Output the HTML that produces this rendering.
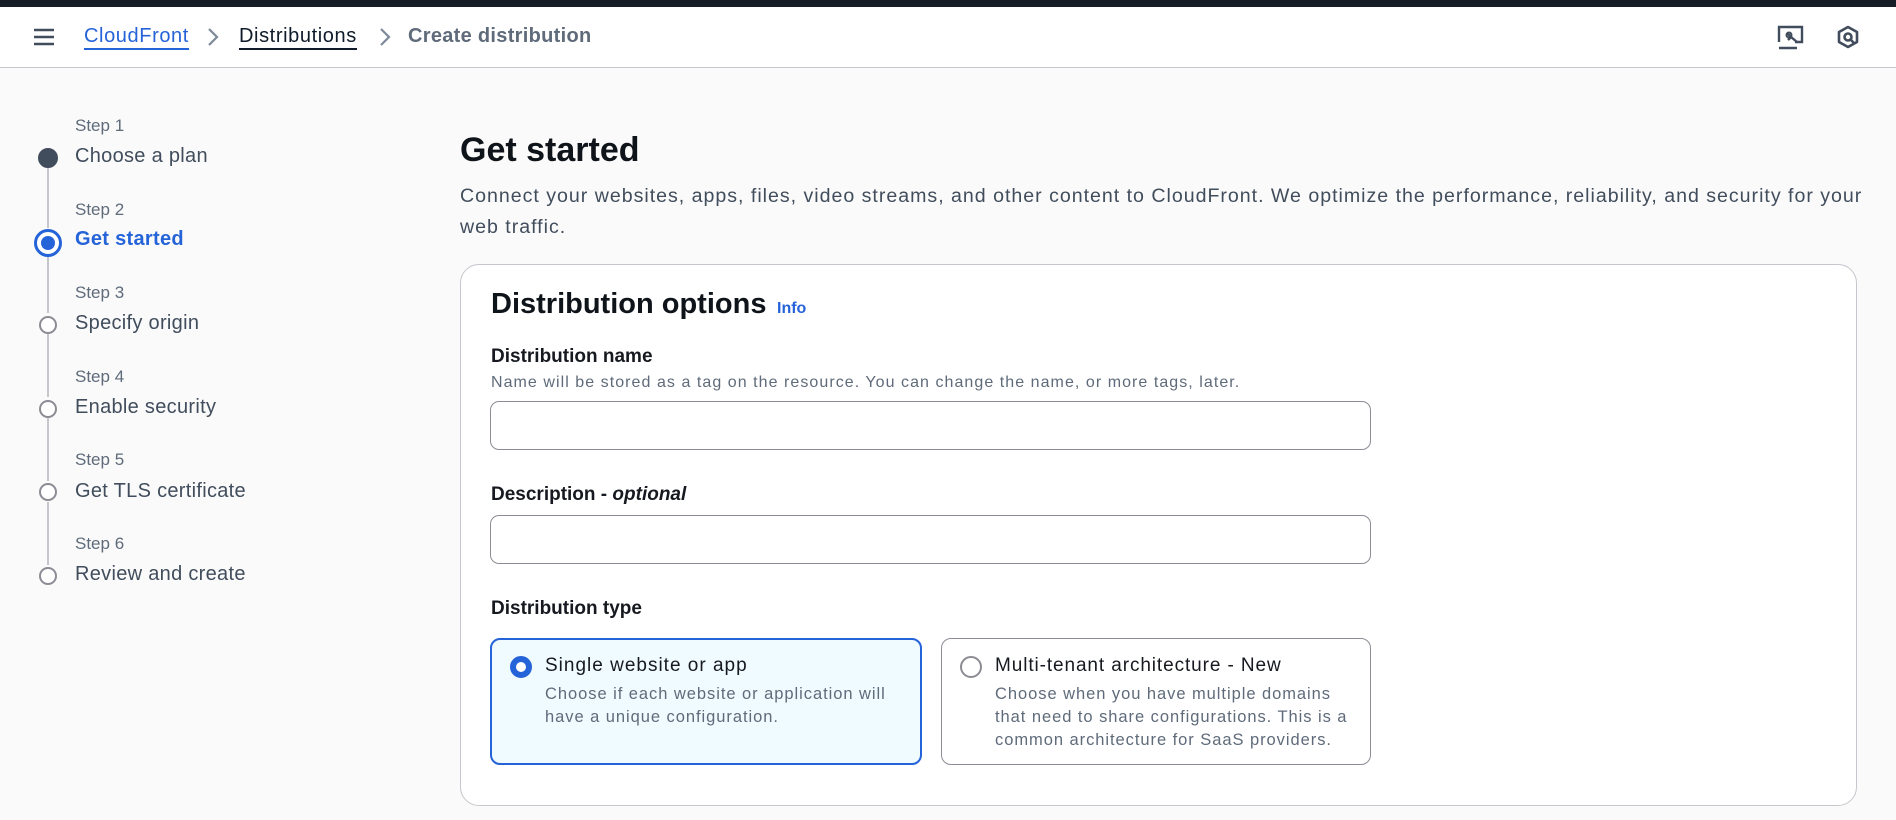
<!DOCTYPE html>
<html><head><meta charset="utf-8"><style>
*{margin:0;padding:0;box-sizing:border-box}
body{width:1896px;height:820px;overflow:hidden;background:#fafafa;font-family:"Liberation Sans",sans-serif;color:#16191f;position:relative}
.a{position:absolute;white-space:nowrap}
.top{position:absolute;left:0;top:0;width:1896px;height:7px;background:#161d26}
.hdr{position:absolute;left:0;top:7px;width:1896px;height:61px;background:#fff;border-bottom:1px solid #c6c6cd}
.bc{font-size:20px;line-height:24px;top:24px;letter-spacing:0.6px}
.lbl{font-size:17px;color:#5f6b7a}
.ttl{font-size:20px;color:#414d5c;letter-spacing:0.3px}
.dot{position:absolute;left:39px;width:18px;height:18px;border-radius:50%;border:2px solid #8c8c94;background:#fff}
.line{position:absolute;left:47px;width:2px;background:#c6c6cd}
.panel{position:absolute;left:460px;top:264px;width:1397px;height:542px;background:#fff;border:1px solid #c6c6cd;border-radius:19px}
.inp{position:absolute;left:490px;width:881px;height:49px;border:1px solid #8c8c94;border-radius:9px;background:#fff}
.fl{font-size:19px;font-weight:bold}
.tile{position:absolute;top:638px;height:127px;border-radius:10px}
.desc{font-size:16.5px;color:#5f6b7a;line-height:23px;letter-spacing:0.95px}
</style></head><body>
<div class="top"></div>
<div class="hdr"></div>
<svg class="a" style="left:33px;top:28px" width="22" height="18" viewBox="0 0 22 18"><path d="M1 2h20M1 9h20M1 16h20" stroke="#414d5c" stroke-width="2.6"/></svg>
<div class="a bc" style="left:84px;color:#2563d9;border-bottom:2px solid #2563d9">CloudFront</div>
<svg class="a" style="left:207px;top:27px" width="12" height="20"><path d="M2 2l8 8-8 8" fill="none" stroke="#7d8998" stroke-width="2.2"/></svg>
<div class="a bc" style="left:239px;color:#0f1b2a;border-bottom:2px solid #0f1b2a">Distributions</div>
<svg class="a" style="left:379px;top:27px" width="12" height="20"><path d="M2 2l8 8-8 8" fill="none" stroke="#7d8998" stroke-width="2.2"/></svg>
<div class="a bc" style="left:408px;color:#5f6b7a;font-weight:bold;letter-spacing:0.3px">Create distribution</div>
<svg class="a" style="left:1777px;top:24px" width="28" height="26" viewBox="0 0 28 26"><path d="M2 18V3h23v15h-7" fill="none" stroke="#414d5c" stroke-width="2.4"/><path d="M2 24h18" stroke="#414d5c" stroke-width="2.4"/><path d="M10 9l4 4m0 0l-3 3m3-3l6 5" stroke="#414d5c" stroke-width="2.4" fill="none"/><circle cx="12" cy="11" r="2.5" fill="none" stroke="#414d5c" stroke-width="2"/></svg>
<svg class="a" style="left:1836px;top:25px" width="24" height="24" viewBox="0 0 24 24"><path d="M12 2l9 5v10l-9 5-9-5V7z" fill="none" stroke="#414d5c" stroke-width="2.6" stroke-linejoin="round"/><circle cx="12" cy="12" r="3.5" fill="none" stroke="#414d5c" stroke-width="2.6"/><path d="M14 14l4 4" stroke="#414d5c" stroke-width="2.6"/></svg>

<div class="line" style="top:168px;height:60px"></div>
<div class="line" style="top:252px;height:61px"></div>
<div class="line" style="top:334px;height:63px"></div>
<div class="line" style="top:418px;height:63px"></div>
<div class="line" style="top:502px;height:63px"></div>
<div class="a lbl" style="left:75px;top:116px">Step 1</div>
<div class="a ttl" style="left:75px;top:145px">Choose a plan</div>
<div class="dot" style="top:148px;background:#414d5c;border-color:#414d5c;width:20px;height:20px;left:38px"></div>
<div class="a lbl" style="left:75px;top:200px">Step 2</div>
<div class="a ttl" style="left:75px;top:228px;color:#2563d9;font-weight:bold">Get started</div>
<div class="dot" style="top:229px;left:34px;width:28px;height:28px;border:3px solid #2563d9"><div style="position:absolute;left:4px;top:4px;width:14px;height:14px;border-radius:50%;background:#2563d9"></div></div>
<div class="a lbl" style="left:75px;top:283px">Step 3</div>
<div class="a ttl" style="left:75px;top:312px">Specify origin</div>
<div class="dot" style="top:316px"></div>
<div class="a lbl" style="left:75px;top:367px">Step 4</div>
<div class="a ttl" style="left:75px;top:396px">Enable security</div>
<div class="dot" style="top:400px"></div>
<div class="a lbl" style="left:75px;top:450px">Step 5</div>
<div class="a ttl" style="left:75px;top:480px">Get TLS certificate</div>
<div class="dot" style="top:483px"></div>
<div class="a lbl" style="left:75px;top:534px">Step 6</div>
<div class="a ttl" style="left:75px;top:563px">Review and create</div>
<div class="dot" style="top:567px"></div>

<div class="a" style="left:460px;top:131px;font-size:34px;font-weight:bold;color:#0f141a">Get started</div>
<div class="a" style="left:460px;top:181px;font-size:19.6px;line-height:31px;color:#414d5c;white-space:normal;width:1410px;letter-spacing:0.98px">Connect your websites, apps, files, video streams, and other content to CloudFront. We optimize the performance, reliability, and security for your web traffic.</div>
<div class="panel"></div>
<div class="a" style="left:491px;top:288px;font-size:29px;font-weight:bold;color:#0f141a">Distribution options</div>
<div class="a" style="left:777px;top:300px;font-size:16px;font-weight:bold;color:#2563d9">Info</div>
<div class="a fl" style="left:491px;top:346px">Distribution name</div>
<div class="a" style="left:491px;top:374px;font-size:16px;color:#5f6b7a;letter-spacing:1.05px">Name will be stored as a tag on the resource. You can change the name, or more tags, later.</div>
<div class="inp" style="top:401px"></div>
<div class="a fl" style="left:491px;top:484px">Description - <i>optional</i></div>
<div class="inp" style="top:515px"></div>
<div class="a fl" style="left:491px;top:598px">Distribution type</div>
<div class="tile" style="left:490px;width:432px;background:#f0fbff;border:2px solid #2563d9"></div>
<div class="tile" style="left:941px;width:430px;background:#fff;border:1px solid #8c8c94"></div>
<div class="a" style="left:510px;top:656px;width:22px;height:22px;border-radius:50%;border:6px solid #2563d9;background:#fff"></div>
<div class="a" style="left:960px;top:656px;width:22px;height:22px;border-radius:50%;border:2px solid #8c8c94;background:#fff"></div>
<div class="a" style="left:545px;top:655px;font-size:19px;letter-spacing:1px">Single website or app</div>
<div class="a desc" style="left:545px;top:683px">Choose if each website or application will<br>have a unique configuration.</div>
<div class="a" style="left:995px;top:655px;font-size:19px;letter-spacing:0.9px">Multi-tenant architecture - New</div>
<div class="a desc" style="left:995px;top:683px">Choose when you have multiple domains<br>that need to share configurations. This is a<br>common architecture for SaaS providers.</div>
</body></html>
